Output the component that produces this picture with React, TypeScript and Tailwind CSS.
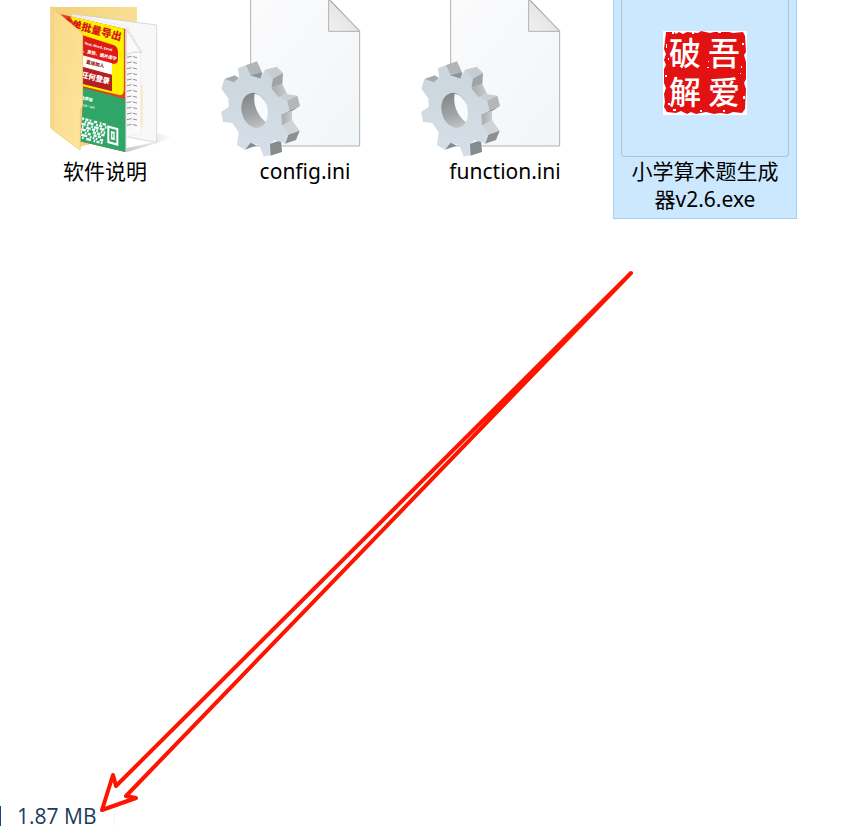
import type { ReactNode } from 'react';
import clsx from 'clsx';

const qrRows = [
    '110110100110010110',
    '100101111001011001',
    '011101001011101110',
    '101001110110100101',
    '001110100011011011',
    '111001011001101100',
    '100111100101010011',
    '011010011100101101',
];

const FolderIcon = () => (
    <svg viewBox="0 0 184 157" className="w-[184px] shrink-0" aria-hidden="true">
        <defs>
            <linearGradient id="folder-front" x1="0" y1="0" x2="1" y2="1">
                <stop offset="0" stopColor="#f7d987" />
                <stop offset="1" stopColor="#ffe49b" />
            </linearGradient>
            <linearGradient id="folder-back" x1="0" y1="0" x2="1" y2="0">
                <stop offset="0" stopColor="#f3cf74" />
                <stop offset="1" stopColor="#f9df95" />
            </linearGradient>
            <linearGradient id="folder-shadow" x1="0" y1="0" x2="1" y2="0">
                <stop offset="0" stopColor="#c9c9c9" />
                <stop offset="1" stopColor="#ffffff" />
            </linearGradient>
            <linearGradient id="folder-sheet" x1="0" y1="0" x2="1" y2="0">
                <stop offset="0" stopColor="#ececee" />
                <stop offset="1" stopColor="#fbfbfc" />
            </linearGradient>
            <clipPath id="folder-cover">
                <path d="M60 42 L256 87 L258 457 L120 424 L128 320 L128 100Z" />
            </clipPath>
        </defs>
        <g transform="translate(27 0) scale(.3333)">
            <path d="M258 445 L350 425 V400 L398 410 Q360 428 258 457Z" fill="url(#folder-shadow)" />
            <path d="M32 21 H291 V395 L120 440Z" fill="url(#folder-back)" />
            <path d="M95 42 L350 75 V427 L258 410Z" fill="#f8f8fa" stroke="#c9c9cc" strokeWidth="2" />
            <path d="M302 255 H308 V382 L302 380Z" fill="#fbe9bd" />
            <path d="M95 42 L262 80 L302 160 V400 L258 412 L120 120Z" fill="url(#folder-sheet)" stroke="#dcdcdf" strokeWidth="1" />
            {Array.from({ length: 13 }, (_, i) => (
                <path
                    key={i}
                    d={`M261 ${172 + i * 17} l14 -3 M279 ${170 + i * 17} l12 3`}
                    stroke="#8f8f97"
                    strokeWidth="3"
                />
            ))}
            <path d="M258 86 L304 158 Q280 152 259 166Z" fill="#fafafa" stroke="#c4c4c8" strokeWidth="2" />
            <path d="M262 83 L306 155" stroke="#efd492" strokeWidth="2" strokeDasharray="8 5" />
            <g clipPath="url(#folder-cover)">
                <rect x="60" y="30" width="200" height="430" fill="#ef3b22" />
                <path d="M80 30 L253 85 V267 Q253 290 236 286 L100 253 V70Z" fill="#fff200" stroke="#b23c10" strokeWidth="2" />
                <path d="M95 95 L220 135 Q234 140 234 155 V178 Q234 194 218 191 L95 163Z" fill="#e01b14" />
                <path d="M100 158 L216 190 V228 L100 197Z" fill="#ffffff" />
                <path d="M100 193 L216 224 V274 L100 245Z" fill="#b41f1f" />
                <path d="M100 256 L258 298 V457 L100 424Z" fill="#2fa568" />
                <g fontFamily="'Noto Sans CJK SC', sans-serif" fontWeight="900">
                    <text x="62" y="74" fontSize="31" fill="#d5180f" transform="rotate(15 62 74)">文单批量导出</text>
                    <text x="133" y="133" fontSize="10" fill="#ffffff" transform="rotate(14 133 133)">Text, Word, Excel</text>
                    <text x="128" y="156" fontSize="13" fill="#ffffff" transform="rotate(14 128 156)">、复核、图片保守</text>
                    <text x="137" y="190" fontSize="14" fill="#951612" transform="rotate(14 137 190)">直接加入</text>
                    <text x="122" y="231" fontSize="22" fill="#ffffff" transform="rotate(14 122 231)">任何登录</text>
                    <text x="122" y="297" fontSize="12" fill="#ffffff" transform="rotate(12 122 297)">免费版</text>
                    <text x="125" y="318" fontSize="8" fill="#b4dfc9" transform="rotate(12 125 318)">扫描二维码</text>
                </g>
                <g transform="translate(124 351) rotate(15)" fill="#ffffff">
                    {qrRows.map((row, y) =>
                        row.split('').map((cell, x) =>
                            cell === '1' ? <rect key={`${x}-${y}`} x={x * 4.5} y={y * 8} width="5" height="7" /> : null
                        )
                    )}
                </g>
                <path d="M202 376 L235 385 V438 L202 429Z" fill="#ffffff" />
                <path d="M208 384 L229 390 V430 L208 424Z" fill="#2fa568" />
                <path d="M213 393 L224 396 V421 L213 418Z" fill="#ffffff" />
                <path d="M217 400 L220 401 V413 L217 412Z" fill="#2fa568" />
            </g>
            <path d="M258 88 V457" stroke="#d8dfe0" strokeWidth="3" />
            <path d="M32 21 L128 101 V318 Q119 325 121 340 V448 L118 449 L32 384Z" fill="url(#folder-front)" stroke="#e9c66e" strokeWidth="2" />
            <path d="M39 31 V385" stroke="#edcb77" strokeWidth="2" />
        </g>
    </svg>
);

const IniIcon = () => (
    <svg viewBox="0 0 184 157" className="w-[184px] shrink-0" aria-hidden="true">
        <defs>
            <linearGradient id="ini-page" x1="0" y1="0" x2="1" y2="1">
                <stop offset="0" stopColor="#fbfbfc" />
                <stop offset="1" stopColor="#f2f5f7" />
            </linearGradient>
            <linearGradient id="ini-fold" x1="0" y1="1" x2="1" y2="0">
                <stop offset="0" stopColor="#f1f1f1" />
                <stop offset="1" stopColor="#dadada" />
            </linearGradient>
            <linearGradient id="gear-face" x1="0" y1="0" x2="0" y2="1">
                <stop offset="0" stopColor="#cbd5dc" />
                <stop offset="1" stopColor="#d6dfe7" />
            </linearGradient>
            <linearGradient id="gear-hole" x1="0" y1="0" x2="0" y2="1">
                <stop offset="0" stopColor="#828486" />
                <stop offset="0.6" stopColor="#a1a4a6" />
                <stop offset="1" stopColor="#bfc3c5" />
            </linearGradient>
            <linearGradient id="gear-slope" x1="0" y1="0" x2="1" y2="0">
                <stop offset="0" stopColor="#a7aaac" />
                <stop offset="1" stopColor="#c8ccce" />
            </linearGradient>
        </defs>
        <g transform="translate(-3 0) scale(.3333)">
            <path d="M122 -6 H355 L449 92 V438 H122Z" fill="url(#ini-page)" stroke="#b0b0b0" strokeWidth="3" />
            <path d="M356 -2 V94 H449Z" fill="url(#ini-fold)" stroke="#b0b0b0" strokeWidth="3" />
            <path d="M107 196 L141 184 L157 219 L150 236 L121 226Z" fill="#b0b5b8" />
            <path d="M121 226 L157 217 L152 236Z" fill="#8f9496" />
            <path d="M43 237 L74 226 L87 234 L71 248Z" fill="#a5abae" />
            <path d="M165 209 L200 200 L219 219 L188 237Z" fill="#c6cccf" />
            <path d="M188 236 L219 219 L217 252 L183 264Z" fill="#9ea3a6" />
            <path d="M183 264 L217 252 L232 283 L204 292Z" fill="url(#gear-slope)" />
            <path d="M203 292 L231 283 L262 287 L231 304Z" fill="#c8ced1" />
            <path d="M230 303 L262 287 L270 318 L238 332Z" fill="#b2b7ba" />
            <path d="M238 332 L270 318 L246 333 L213 344Z" fill="#858889" />
            <path d="M213 343 L246 332 V362 L215 377Z" fill="url(#gear-slope)" />
            <path d="M215 376 L246 361 L269 392 L235 405Z" fill="#cdd3d7" />
            <path d="M235 404 L269 392 L258 420 L225 431Z" fill="#8b9092" />
            <path d="M180 431 L213 421 L216 456 L181 467Z" fill="#868c8e" />
            <path d="M104 449 L121 427 L140 437Z" fill="#868c8e" />
            <path
                d="M84 205 L107 196 L122 227 L151 236 L165 209 L189 235 L184 264 L204 292 L231 302 L238 332 L214 343 L216 376 L235 404 L225 430 L196 421 L180 430 L181 466 L161 470 L148 436 L122 428 L104 449 L81 435 L86 397 L67 369 L39 366 L34 335 L56 321 L55 295 L34 266 L43 237 L71 247 L88 235Z"
                fill="url(#gear-face)"
            />
            <ellipse cx="134" cy="331" rx="39" ry="53" transform="rotate(-14 134 331)" fill="url(#gear-hole)" />
            <path d="M134 281 Q126 330 167 367 Q179 349 171 316 Q157 284 134 281Z" fill="#f9fafb" />
        </g>
    </svg>
);

const SealIcon = () => (
    <svg viewBox="0 0 84 84" className="w-[84px] overflow-visible" aria-hidden="true">
        <rect width="84" height="84" fill="#ffffff" />
        <path
            d="M3 1 L11 1 L13 3 L16 1 L20 3 L24 1 L35 2 L38 0 L47 2 L51 1 L66 1 L70 2 L80 1 L82 5 L83 21 L81 24 L83 31 L83 48 L81 52 L83 58 L82 78 L79 82 L70 81 L65 83 L57 82 L51 83 L43 81 L33 83 L28 81 L24 83 L18 80 L13 82 L4 81 L1 76 L2 71 L1 63 L3 57 L1 52 V38 L3 34 L1 29 L3 23 L1 18 L2 10Z"
            fill="#e31212"
        />
        <path
            d="M9 1h2v2H9z M29 1h2v2h-2z M55 1h3v1h-3z M3 13h1v4H3z M2 44h2v2H2z M79 12h2v2h-2z M78 35h1v2h-1z M45 30h1v1h-1z M44 36h2v1h-2z M5 27h1v2H5z M80 65h2v3h-2z M37 79h2v2h-2z M60 79h2v2h-2z M5 72h2v2H5z M10 78h3v2h-3z M77 42h1v1h-1z"
            fill="#ffffff"
        />
        <g fontFamily="'Noto Sans CJK SC', sans-serif" fontSize="32" fontWeight="500" fill="#ffffff">
            <text x="6" y="34">破</text>
            <text x="45" y="34">吾</text>
            <text x="6" y="73">解</text>
            <text x="45" y="73">爱</text>
        </g>
    </svg>
);

interface FileTileProps {
    name: string;
    selected?: boolean;
    children: ReactNode;
}

const FileTile = ({ name, selected, children }: FileTileProps) => (
    <button
        type="button"
        className={clsx(
            'flex w-[184px] flex-col items-center self-start border-x border-b pb-[5px]',
            selected ? 'border-[#99d1ff] bg-[#cce8ff]' : 'border-transparent hover:bg-[#e5f3ff]'
        )}
    >
        <span className="flex h-[157px] w-full justify-center">{children}</span>
        <span className="w-[160px] text-center text-[21px] leading-7 break-all">{name}</span>
    </button>
);

export default function App() {
    return (
        <div className="relative flex min-h-screen flex-col overflow-hidden bg-white font-['Noto_Sans','Noto_Sans_CJK_SC',sans-serif] text-black">
            <main className="flex flex-wrap gap-4 pl-[13px]">
                <FileTile name="软件说明">
                    <FolderIcon />
                </FileTile>
                <FileTile name="config.ini">
                    <IniIcon />
                </FileTile>
                <FileTile name="function.ini">
                    <IniIcon />
                </FileTile>
                <FileTile name="小学算术题生成器v2.6.exe" selected>
                    <span className="flex w-[168px] items-start justify-center rounded-b-sm border-x border-b border-[#aac5da] pt-[31px]">
                        <SealIcon />
                    </span>
                </FileTile>
            </main>

            <footer className="mt-auto flex items-center pb-[9px] font-['Open_Sans',sans-serif] text-[21px] leading-6 text-[#1e395b]">
                <span className="h-5 w-px bg-[#1e3f8b]" />
                <span className="pr-[18px] pl-4">1.87 MB</span>
                <span className="h-5 w-px bg-[#f3f3f3]" />
            </footer>

            {/* arrow from the selected file down to its size */}
            <svg className="pointer-events-none absolute top-0 left-0" width="847" height="837" aria-hidden="true">
                <path
                    d="M631 273 L116 786 L113 775 L102 810 L136 798 L126 796Z"
                    fill="none"
                    stroke="#ff1400"
                    strokeWidth="4"
                    strokeLinejoin="round"
                />
            </svg>
        </div>
    );
}
